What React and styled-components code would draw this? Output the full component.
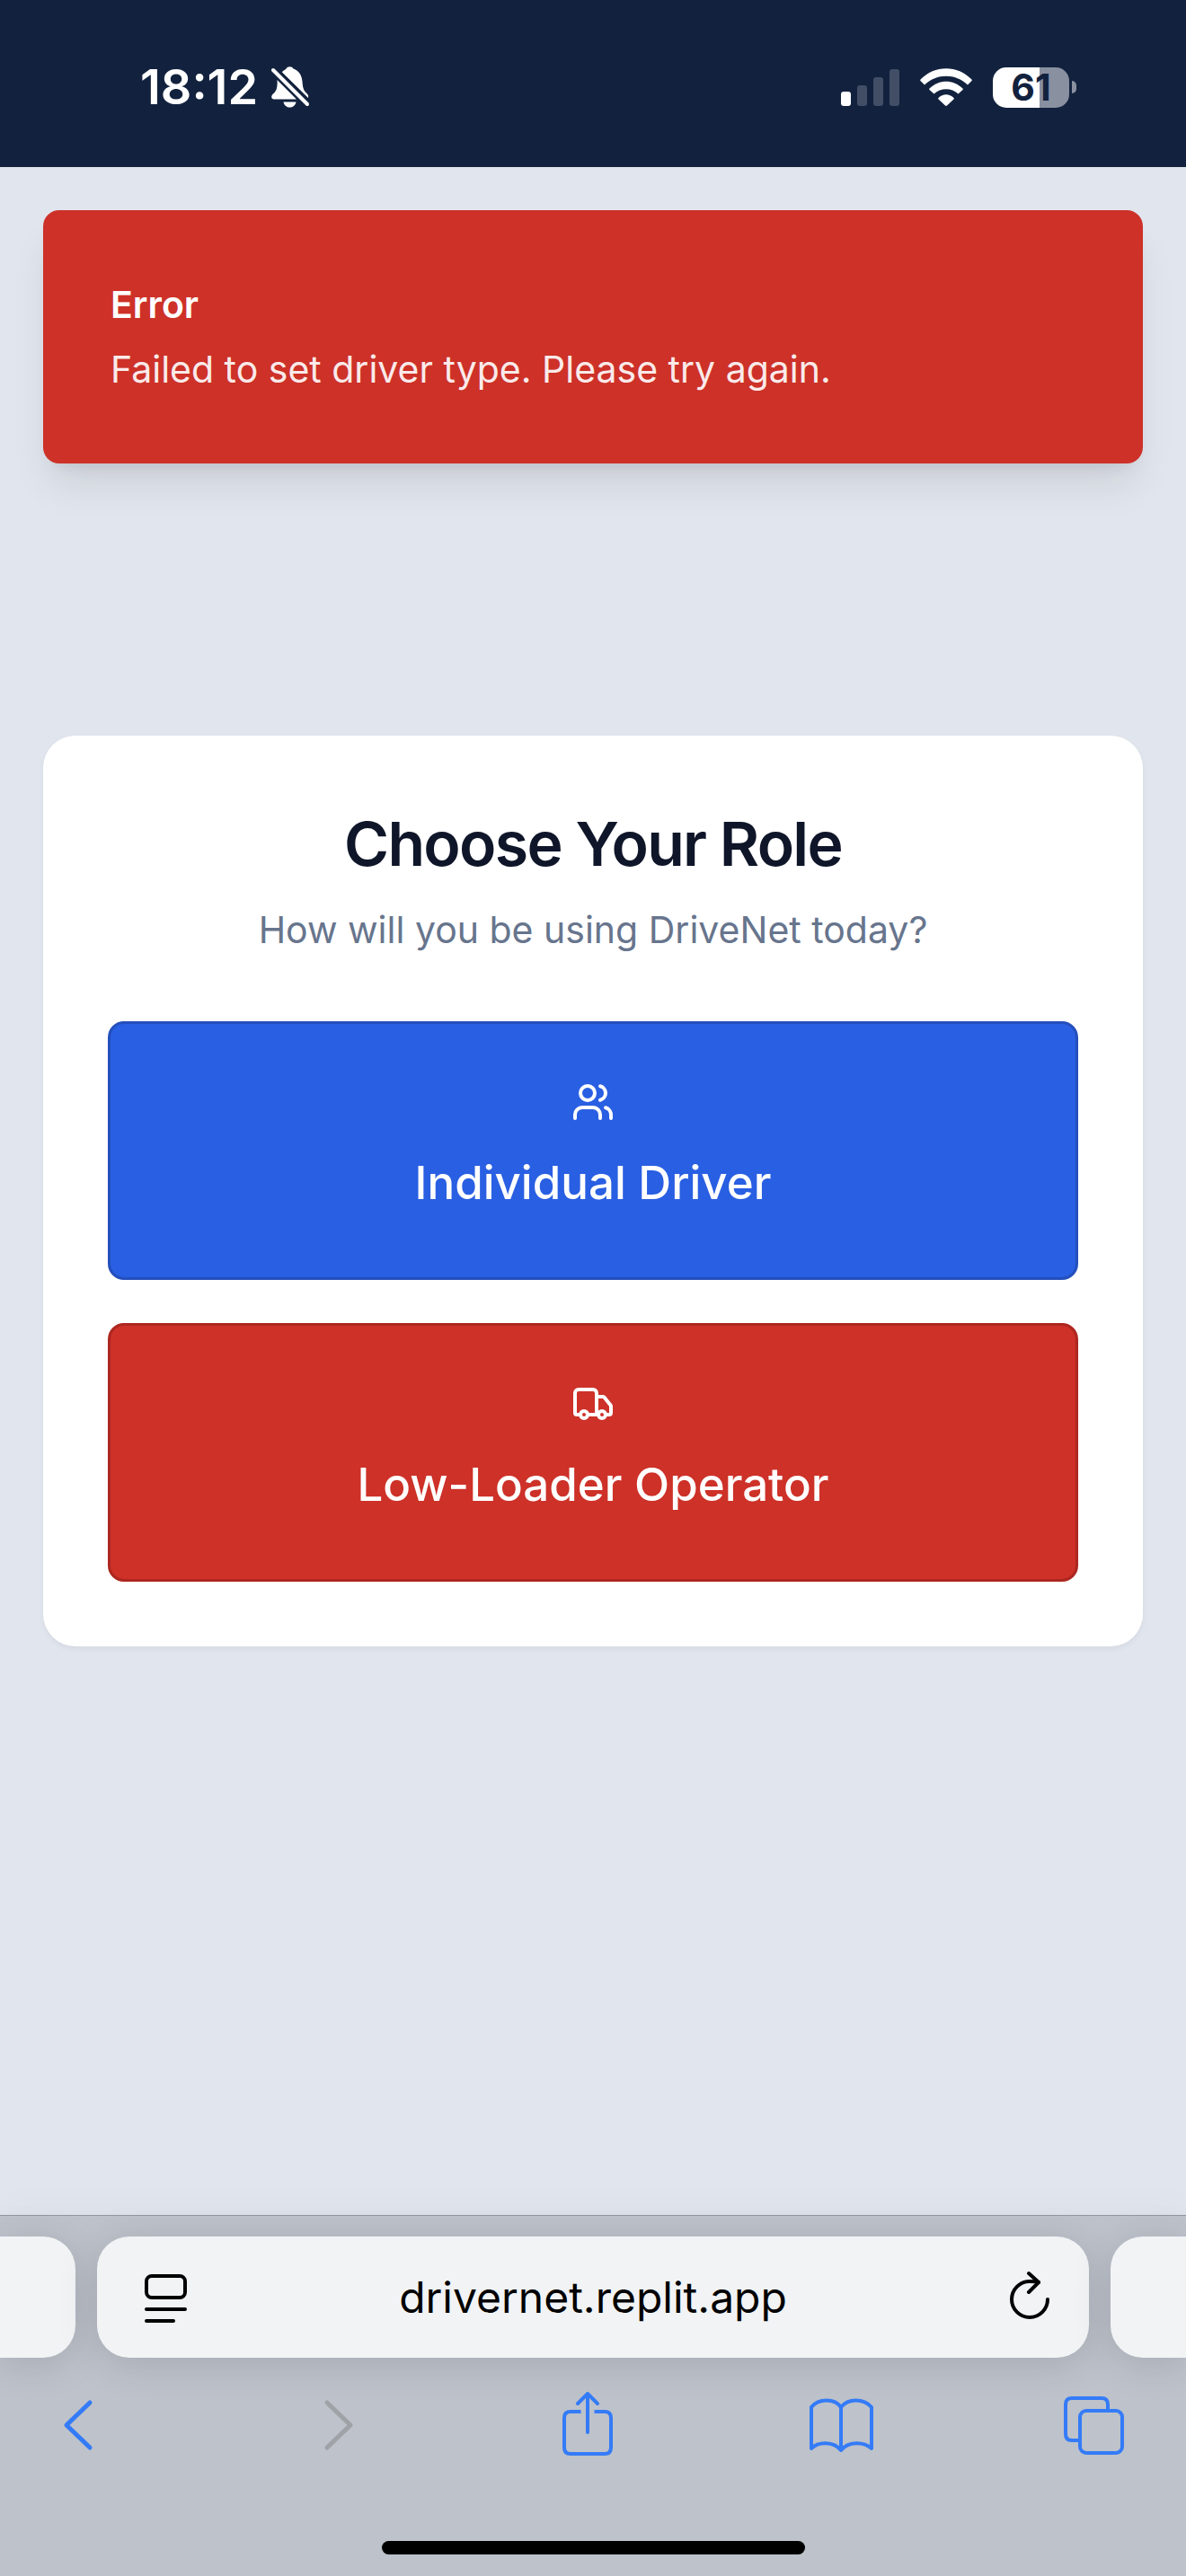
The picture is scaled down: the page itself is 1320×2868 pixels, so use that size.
import React from "react";
import styled, { createGlobalStyle } from "styled-components";
import { Users, Truck } from "lucide-react";

const GlobalStyle = createGlobalStyle`
  *, *::before, *::after { box-sizing: border-box; }
  body {
    margin: 0;
    background: #e1e5ed;
    font-family: Inter, "Liberation Sans", sans-serif;
    -webkit-font-smoothing: antialiased;
  }
  h1, p { margin: 0; }
  button, input { font-family: inherit; }
  svg { display: block; flex: none; overflow: visible; }
`;

const Screen = styled.div`
  min-height: 100vh;
  display: flex;
  flex-direction: column;
`;

/* Status bar */

const StatusBar = styled.header`
  display: flex;
  justify-content: space-between;
  align-items: center;
  padding: 73px 122px 65px 156px;
  background: #12223e;
  color: #fff;
`;

const StatusGroup = styled.div`
  display: flex;
  align-items: center;
  height: 48px;
  gap: ${(p) => p.$gap}px;
`;

const Clock = styled.time`
  font-size: 54px;
  line-height: 48px;
  font-weight: 600;
`;

const Battery = styled.div`
  display: flex;
  align-items: center;
  gap: 3px;
`;

const BatteryBody = styled.div`
  width: 85px;
  height: 45px;
  border-radius: 15px;
  background: linear-gradient(to right, #fff 61%, #8990a0 61%);
  color: #12223e;
  font-size: 41px;
  line-height: 45px;
  font-weight: 700;
  text-align: center;
`;

const BatteryTip = styled.div`
  width: 5px;
  height: 14px;
  border-radius: 0 5px 5px 0;
  background: #8990a0;
`;

/* Page */

const Main = styled.main`
  position: relative;
  flex: 1;
  display: flex;
  flex-direction: column;
  justify-content: center;
  padding: 48px;
  background: #e1e5ed;
`;

const Toast = styled.div`
  position: absolute;
  top: 48px;
  left: 48px;
  right: 48px;
  display: grid;
  gap: 12px;
  padding: 72px;
  border: 3px solid #cd3128;
  border-radius: 18px;
  background: #cd3128;
  color: #fff;
  font-size: 41px;
  line-height: 60px;
  box-shadow: 0 30px 45px -9px rgba(0, 0, 0, 0.1), 0 12px 18px -12px rgba(0, 0, 0, 0.1);
`;

const ToastTitle = styled.p`
  font-weight: 600;
`;

const ToastText = styled.p`
  opacity: 0.9;
`;

const Card = styled.section`
  display: flex;
  flex-direction: column;
  gap: 72px;
  padding: 72px;
  border-radius: 36px;
  background: #fff;
  box-shadow: 0 3px 6px rgba(0, 0, 0, 0.05);
`;

const CardHeader = styled.div`
  display: grid;
  gap: 18px;
  text-align: center;
`;

const CardTitle = styled.h1`
  font-size: 68px;
  line-height: 96px;
  font-weight: 600;
  letter-spacing: -0.025em;
  color: #0f1629;
`;

const CardText = styled.p`
  font-size: 41px;
  line-height: 60px;
  color: #67758d;
`;

const Choices = styled.div`
  display: grid;
  gap: 48px;
`;

const RoleButton = styled.button`
  display: flex;
  flex-direction: column;
  align-items: center;
  gap: 24px;
  padding: 63px 48px;
  border: 3px solid ${(p) => p.$edge};
  border-radius: 18px;
  background: ${(p) => p.$fill};
  color: #fff;
  font-size: 51px;
  line-height: 84px;
  font-weight: 500;
`;

/* Browser controls */

const BrowserBar = styled.footer`
  position: relative;
  display: flex;
  flex-direction: column;
  padding: 23px 0 24px;
  border-top: 1px solid #9298a2;
  background: #bdc2cb;
  box-shadow: 0 0 48px rgba(0, 0, 0, 0.04);
  overflow-x: clip;
`;

const TabStrip = styled.div`
  display: flex;
  gap: 24px;
  height: 135px;
`;

const tabShadow = "0 6px 45px rgba(0, 0, 0, 0.13)";

const SideTab = styled.div`
  width: 84px;
  border-radius: ${(p) => (p.$left ? "0 36px 36px 0" : "36px 0 0 36px")};
  background: #f1f3f5;
  box-shadow: ${tabShadow};
`;

const AddressBar = styled.div`
  flex: 1;
  min-width: 0;
  display: flex;
  align-items: center;
  padding: 0 44px;
  border-radius: 36px;
  background: #f1f3f5;
  box-shadow: ${tabShadow};
`;

const AddressInput = styled.input`
  flex: 1;
  min-width: 0;
  padding: 0;
  border: 0;
  outline: 0;
  background: transparent;
  color: #000;
  font-size: 48px;
  line-height: 66px;
  text-align: center;
`;

const IconButton = styled.button`
  padding: 0;
  border: 0;
  background: none;
  color: ${(p) => p.$color};
`;

const Toolbar = styled.nav`
  display: flex;
  justify-content: space-between;
  padding: 38px 66px 94px;
`;

const HomeIndicator = styled.div`
  align-self: center;
  width: 471px;
  height: 15px;
  border-radius: 8px;
  background: #000;
`;

const BLUE = "#347bf7";

function Line({ size, width, children }) {
  return (
    <svg
      width={size}
      height={size}
      viewBox={`0 0 ${size} ${size}`}
      fill="none"
      stroke="currentColor"
      strokeWidth={width}
      strokeLinecap="round"
      strokeLinejoin="round"
      aria-hidden="true"
    >
      {children}
    </svg>
  );
}

function BellOff() {
  return (
    <svg width="42" height="46" viewBox="0 0 42 46" aria-hidden="true">
      <path
        fill="#fff"
        d="M12 6C14 4 15.500 3.500 16.500 2.500C18-.5 23-.5 24.500 2.500C31 5 34 10 34.500 17C35 24 36 27 39.500 30C41 31.500 41.500 33 41 35L12 6.500Z"
      />
      <path
        fill="#fff"
        d="M6.500 15L28 36.500H3C-.5 36.500-.5 32.500 2 30.500C6 27 7 23 6.500 15Z"
      />
      <path fill="#fff" d="M13.500 39.500H27.500C26 47.500 15 47.500 13.500 39.500Z" />
      <path stroke="#12223e" strokeWidth="3" d="M5 2L43 40" />
      <path stroke="#fff" strokeWidth="4" strokeLinecap="round" d="M2 4L40 42" />
    </svg>
  );
}

function Signal() {
  return (
    <svg width="65" height="42" viewBox="0 0 65 42" fill="#414e65" aria-hidden="true">
      <rect x="0" y="26" width="11" height="16" rx="3" fill="#fff" />
      <rect x="18" y="19" width="11" height="23" rx="3" />
      <rect x="36" y="10" width="11" height="32" rx="3" />
      <rect x="54" y="1" width="11" height="41" rx="3" />
    </svg>
  );
}

function Wifi() {
  return (
    <svg width="58" height="42" viewBox="0 0 58 42" fill="#fff" aria-hidden="true">
      <path d="M0.500 12.500C16-4 42-4 57.500 12.500C58 13 58 13.500 57.500 14L53 18.500C39.500 5.500 18.500 5.500 5 18.500L0.500 14C0 13.500 0 13 .5 12.500Z" />
      <path d="M10.500 22.500C21 12 37 12 47.500 22.500C48 23 48 23.500 47.500 24L42.500 28.500C35 21.500 23 21.500 15.500 28.500L10.500 24C10 23.500 10 23 10.500 22.500Z" />
      <path d="M20.500 33C25.500 28 32.500 28 37.500 33C38 33.500 38 34 37.500 34.500L30 41.500C29.500 42 28.500 42 28 41.500L20.500 34.500C20 34 20 33.500 20.500 33Z" />
    </svg>
  );
}

export default function App() {
  return (
    <Screen>
      <GlobalStyle />

      <StatusBar>
        <StatusGroup $gap={15}>
          <Clock>18:12</Clock>
          <BellOff />
        </StatusGroup>
        <StatusGroup $gap={23}>
          <Signal />
          <Wifi />
          <Battery>
            <BatteryBody>61</BatteryBody>
            <BatteryTip />
          </Battery>
        </StatusGroup>
      </StatusBar>

      <Main>
        <Toast role="alert">
          <ToastTitle>Error</ToastTitle>
          <ToastText>Failed to set driver type. Please try again.</ToastText>
        </Toast>

        <Card>
          <CardHeader>
            <CardTitle>Choose Your Role</CardTitle>
            <CardText>How will you be using DriveNet today?</CardText>
          </CardHeader>
          <Choices>
            <RoleButton type="button" $fill="#295fe2" $edge="#244fbc">
              <Users size={48} aria-hidden="true" />
              Individual Driver
            </RoleButton>
            <RoleButton type="button" $fill="#cd3128" $edge="#ad2720">
              <Truck size={48} aria-hidden="true" />
              Low-Loader Operator
            </RoleButton>
          </Choices>
        </Card>
      </Main>

      <BrowserBar>
        <TabStrip>
          <SideTab $left />
          <AddressBar>
            <IconButton type="button" $color="#000" aria-label="Page menu">
              <Line size={56} width={4}>
                <rect x="11" y="4" width="43" height="24" rx="6" />
                <path d="M11 41H54M11 54H41" />
              </Line>
            </IconButton>
            <AddressInput type="text" aria-label="Address" defaultValue="drivernet.replit.app" />
            <IconButton type="button" $color="#000" aria-label="Reload">
              <Line size={56} width={4}>
                <path d="M54 30A20 20 0 1 1 34 10C38 10 41 10 44 11" />
                <path d="M33 1L44 11L33 22" />
              </Line>
            </IconButton>
          </AddressBar>
          <SideTab />
        </TabStrip>

        <Toolbar aria-label="Browser">
          <IconButton type="button" $color={BLUE} aria-label="Back">
            <Line size={72} width={5}>
              <path d="M34 12L8 37L34 62" />
            </Line>
          </IconButton>
          <IconButton type="button" $color="#9fa2a6" aria-label="Forward" disabled>
            <Line size={72} width={5}>
              <path d="M19 12L45 37L19 62" />
            </Line>
          </IconButton>
          <IconButton type="button" $color={BLUE} aria-label="Share">
            <Line size={72} width={4}>
              <path strokeLinecap="butt" d="M22.500 22H11Q4 22 4 29V62Q4 69 11 69H49Q56 69 56 62V29Q56 22 49 22H37.500" />
              <path d="M30 45V2M19 13L30 2L41 13" />
            </Line>
          </IconButton>
          <IconButton type="button" $color={BLUE} aria-label="Bookmarks">
            <Line size={72} width={4}>
              <path d="M33 17C26 7 8 7 0 17V63C8 55 25 55 33 65C41 55 58 55 67 63V17C58 7 41 7 33 17ZM33 17V65" />
            </Line>
          </IconButton>
          <IconButton type="button" $color={BLUE} aria-label="Tabs">
            <Line size={72} width={4}>
              <rect x="20" y="21" width="47" height="47" rx="7" />
              <path strokeLinecap="butt" d="M20 54H11Q4 54 4 47V14Q4 7 11 7H44Q51 7 51 14V21" />
            </Line>
          </IconButton>
        </Toolbar>

        <HomeIndicator />
      </BrowserBar>
    </Screen>
  );
}
